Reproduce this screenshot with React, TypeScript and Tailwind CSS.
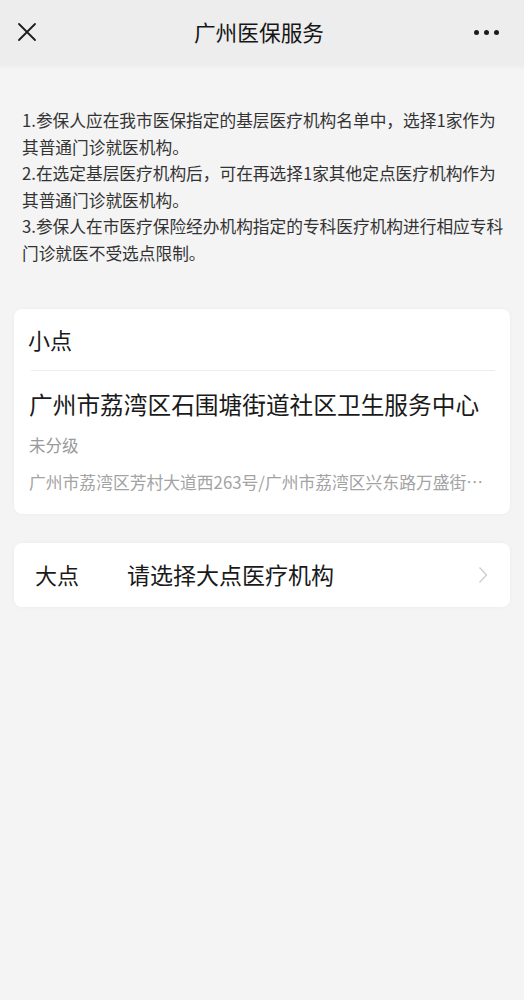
import React from 'react';

const font = { fontFamily: '"Noto Sans CJK SC", "Noto Sans", sans-serif' };

export default function App() {
  const notes = [
    '1.参保人应在我市医保指定的基层医疗机构名单中，选择1家作为',
    '其普通门诊就医机构。',
    '2.在选定基层医疗机构后，可在再选择1家其他定点医疗机构作为',
    '其普通门诊就医机构。',
    '3.参保人在市医疗保险经办机构指定的专科医疗机构进行相应专科',
    '门诊就医不受选点限制。',
  ];

  return (
    <div className="w-[524px] h-[1000px] bg-[#f4f4f4] font-['Noto_Sans_CJK_SC',sans-serif]" style={font}>
      {/* header */}
      <div className="h-[64px] bg-[#ededed] flex items-center justify-between px-[16px] relative">
        <svg width="20" height="20" viewBox="0 0 20 20" className="ml-[1px]">
          <path d="M2 2 L18 18 M18 2 L2 18" stroke="#1c1c1c" strokeWidth="1.8" strokeLinecap="round" />
        </svg>
        <h1 className="absolute left-0 right-0 pr-[6px] text-center text-[21.7px] font-normal text-[#161616] pointer-events-none">
          广州医保服务
        </h1>
        <div className="flex gap-[5px] mr-[9px]">
          <span className="w-[5px] h-[5px] rounded-full bg-[#1c1c1c]" />
          <span className="w-[5px] h-[5px] rounded-full bg-[#1c1c1c]" />
          <span className="w-[5px] h-[5px] rounded-full bg-[#1c1c1c]" />
        </div>
      </div>
      <div className="h-[6px] bg-gradient-to-b from-[#ececec] to-[#f4f4f4]" />

      {/* notes */}
      <div className="pt-[37px] pl-[22px] text-[16.7px] leading-[26.6px] text-[#333333]">
        {notes.map((line, i) => (
          <div key={i} className="whitespace-nowrap">{line}</div>
        ))}
      </div>

      {/* 小点 card */}
      <div className="mx-[14px] mt-[42px] bg-white rounded-[8px] shadow-[0_0_4px_rgba(0,0,0,0.04)]">
        <div className="h-[61px] flex items-center pl-[14px] text-[22px] text-[#1a1a1a]">小点</div>
        <div className="h-px bg-[#ececec] ml-[17px] mr-[15px]" />
        <div className="pl-[15px] pt-[17px] pb-[20px]">
          <div className="text-[23.7px] leading-[32px] text-[#1a1a1a] whitespace-nowrap">
            广州市荔湾区石围塘街道社区卫生服务中心
          </div>
          <div className="mt-[13px] text-[16.5px] leading-[24px] text-[#9a9a9a]">未分级</div>
          <div className="mt-[13px] text-[16.8px] leading-[24px] text-[#a3a3a3] whitespace-nowrap">
            广州市荔湾区芳村大道西263号/广州市荔湾区兴东路万盛街…
          </div>
        </div>
      </div>

      {/* 大点 card */}
      <div className="mx-[14px] mt-[29px] h-[64px] bg-white rounded-[8px] shadow-[0_0_4px_rgba(0,0,0,0.04)] flex items-center pl-[21px] pr-[22px]">
        <span className="text-[22px] text-[#1a1a1a] w-[92px]">大点</span>
        <span className="text-[23px] text-[#1a1a1a] flex-1">请选择大点医疗机构</span>
        <svg width="10" height="18" viewBox="0 0 10 18">
          <path d="M1.5 1.5 L8.5 9 L1.5 16.5" fill="none" stroke="#cfcfcf" strokeWidth="1.4" />
        </svg>
      </div>
    </div>
  );
}
